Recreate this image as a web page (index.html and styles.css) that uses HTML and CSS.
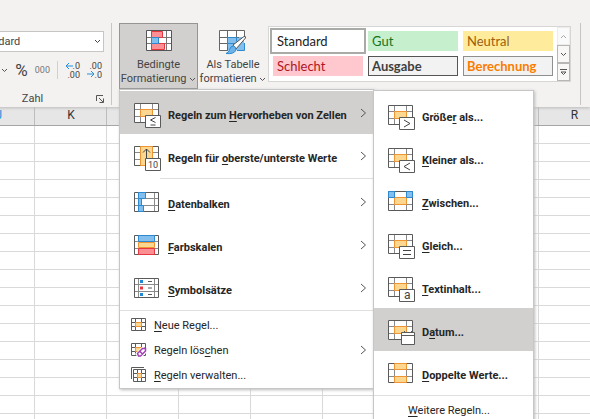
FILE: index.html
```html
<!DOCTYPE html>
<html lang="de">

<head>
    <meta charset="UTF-8">
    <meta name="viewport" content="width=device-width, initial-scale=1.0">
    <title>Bedingte Formatierung</title>
    <link rel="stylesheet" href="styles.css">
</head>

<body>
    <!-- shared icon parts -->
    <svg class="sprite" aria-hidden="true">
        <symbol id="grid" viewBox="0 0 25 20">
            <path fill="none" stroke="#8a8a8a" d="M6.5 0v20M18.5 0v20M0 6.5h25M0 13.5h25" />
            <path fill="none" stroke="#5a5a5a" d="M.5.5h24v19H.5z" />
        </symbol>
        <symbol id="cell" viewBox="0 0 25 20">
            <path fill="#fff" d="M0 0h25v20H0z" />
            <use href="#grid" />
            <path fill="#fbd78f" stroke="#ef9433" d="M6.5 6.5h12v7h-12z" />
        </symbol>
        <symbol id="small" viewBox="0 0 15 13">
            <path fill="#fff" d="M0 0h15v13H0z" />
            <path fill="none" stroke="#5a5a5a" d="M.5.5h14v12H.5zM4.5 0v13M10.5 0v13M0 4.5h15M0 8.5h15" />
            <path fill="#fbd78f" stroke="#ef9433" d="M4.5 4.5h6v4h-6z" />
        </symbol>
    </svg>

    <div class="ribbon">
        <div class="group number-group">
            <select class="format-select" aria-label="Zahlenformat">
                <option>Standard</option>
            </select>
            <div class="number-tools">
                <button type="button" class="tool" aria-label="Buchhaltungsformat">
                    <svg width="7" height="5" viewBox="0 0 7 5"><path class="chev" d="M1 1l2.500 2.500L6 1" /></svg>
                </button>
                <button type="button" class="tool percent">%</button>
                <button type="button" class="tool thousands">000</button>
                <span class="tool-line"></span>
                <button type="button" class="tool decimals" aria-label="Dezimalstelle hinzufügen">
                    <svg width="15" height="16" viewBox="0 0 15 16">
                        <text x="15" y="7">.0</text>
                        <text x="15" y="16">.00</text>
                        <path class="arrow" d="M8 4H1M4 1L1 4l3 3" />
                    </svg>
                </button>
                <button type="button" class="tool decimals" aria-label="Dezimalstelle entfernen">
                    <svg width="15" height="16" viewBox="0 0 15 16">
                        <text x="15" y="7">.00</text>
                        <text x="15" y="16">.0</text>
                        <path class="arrow" d="M0 12h7M4 9l3 3-3 3" />
                    </svg>
                </button>
            </div>
            <div class="group-footer">
                <span class="group-title">Zahl</span>
                <button type="button" class="tool" aria-label="Zahlenformat-Dialog">
                    <svg width="8" height="8" viewBox="0 0 8 8"><path class="chev" d="M.5 6V.5H7M3 3l4 4M7.500 3.500v4h-4" /></svg>
                </button>
            </div>
        </div>

        <div class="group styles-group">
            <div class="dropdown">
                <button type="button" class="big-btn active">
                    <svg width="26" height="21" viewBox="0 0 26 21">
                        <path fill="#fff" d="M.5.5h25v20H.5z" />
                        <path fill="none" stroke="#777" d="M5.500 0v21M20.500 0v21M0 7.500h26M0 13.500h26" />
                        <path fill="none" stroke="#555" d="M.5.5h25v20H.5z" />
                        <path fill="#fc8f94" stroke="#e8383f" d="M5.500 1.500h11v6h-11zM5.500 13.500h13v6h-13z" />
                        <path fill="#83beec" stroke="#2e8ad0" d="M5.500 7.500h7v6h-7z" />
                    </svg>
                    <span>Bedingte</span>
                    <span>Formatierung <svg width="7" height="5" viewBox="0 0 7 5"><path class="chev" d="M1 1l2.500 2.500L6 1" /></svg></span>
                </button>

                <ul class="menu main-menu">
                    <li>
                        <button type="button" class="item selected">
                            <svg class="icon" viewBox="0 0 25 20">
                                <use href="#cell" />
                                <path class="badge" d="M11.500 12.500h15v12h-15z" />
                                <path class="sign" d="M21.500 14.500l-5 2.500 5 2.500M16.500 22h5" />
                            </svg>
                            <span class="label">Regeln zum <u>H</u>ervorheben von Zellen</span>
                            <svg class="more" viewBox="0 0 7 10"><path d="M1 1l4.500 4L1 9" /></svg>
                        </button>
                        <ul class="menu sub-menu">
                            <li>
                                <button type="button" class="item">
                                    <svg class="icon" viewBox="0 0 25 20">
                                        <use href="#cell" />
                                        <path class="badge" d="M11.500 12.500h15v12h-15z" />
                                        <path class="sign" d="M16 15l6 3.500-6 3.500" />
                                    </svg>
                                    <span class="label">Größe<u>r</u> als...</span>
                                </button>
                            </li>
                            <li>
                                <button type="button" class="item">
                                    <svg class="icon" viewBox="0 0 25 20">
                                        <use href="#cell" />
                                        <path class="badge" d="M11.500 12.500h15v12h-15z" />
                                        <path class="sign" d="M22 15l-6 3.500 6 3.500" />
                                    </svg>
                                    <span class="label"><u>K</u>leiner als...</span>
                                </button>
                            </li>
                            <li>
                                <button type="button" class="item">
                                    <svg class="icon" viewBox="0 0 25 20">
                                        <use href="#cell" />
                                        <path fill="#83beec" stroke="#2e8ad0" d="M.5.5h6v6h-6zM18.500.5h6v6h-6z" />
                                    </svg>
                                    <span class="label"><u>Z</u>wischen...</span>
                                </button>
                            </li>
                            <li>
                                <button type="button" class="item">
                                    <svg class="icon" viewBox="0 0 25 20">
                                        <use href="#cell" />
                                        <path class="badge" d="M11.500 12.500h15v12h-15z" />
                                        <path class="sign" d="M15 16.500h8M15 20.500h8" />
                                    </svg>
                                    <span class="label"><u>G</u>leich...</span>
                                </button>
                            </li>
                            <li>
                                <button type="button" class="item">
                                    <svg class="icon" viewBox="0 0 25 20">
                                        <use href="#cell" />
                                        <path class="badge" d="M11.500 12.500h15v12h-15z" />
                                        <text x="16" y="22">a</text>
                                    </svg>
                                    <span class="label"><u>T</u>extinhalt...</span>
                                </button>
                            </li>
                            <li>
                                <button type="button" class="item selected">
                                    <svg class="icon" viewBox="0 0 25 20">
                                        <use href="#cell" />
                                        <path class="badge" d="M13.500 12.500h13v12h-13zM13.500 15.500h13M16.500 11v2M23.500 11v2" />
                                    </svg>
                                    <span class="label">D<u>a</u>tum...</span>
                                </button>
                            </li>
                            <li>
                                <button type="button" class="item">
                                    <svg class="icon" viewBox="0 0 25 20">
                                        <path fill="#fff" d="M0 0h25v20H0z" />
                                        <use href="#grid" />
                                        <path fill="#fbd78f" stroke="#ef9433" d="M6.500.5h12v6h-12zM6.500 13.500h12v6h-12z" />
                                    </svg>
                                    <span class="label"><u>D</u>oppelte Werte...</span>
                                </button>
                            </li>
                            <li class="line"></li>
                            <li><button type="button" class="item compact text-only"><span class="label"><u>W</u>eitere Regeln...</span></button></li>
                        </ul>
                    </li>
                    <li>
                        <button type="button" class="item">
                            <svg class="icon" viewBox="0 0 25 20">
                                <path fill="#fff" d="M0 0h25v20H0z" />
                                <use href="#grid" />
                                <path fill="#fbd78f" stroke="#ef9433" d="M6.500.5h12v19h-12z" />
                                <path class="sign" d="M12.500 12V3M9 6.500L12.500 3 16 6.500" />
                                <path class="badge" d="M11.500 12.500h15v12h-15z" />
                                <text class="ten" x="14" y="22">10</text>
                            </svg>
                            <span class="label">Regeln für <u>o</u>berste/unterste Werte</span>
                            <svg class="more" viewBox="0 0 7 10"><path d="M1 1l4.500 4L1 9" /></svg>
                        </button>
                    </li>
                    <li class="line inset"></li>
                    <li>
                        <button type="button" class="item">
                            <svg class="icon" viewBox="0 0 25 20">
                                <path fill="#fff" d="M0 0h25v20H0z" />
                                <path fill="none" stroke="#8a8a8a" d="M4.500 0v20M20.500 0v20M0 6.500h25M0 13.500h25" />
                                <path fill="none" stroke="#5a5a5a" d="M.5.5h24v19H.5z" />
                                <path fill="#83beec" stroke="#2e8ad0" d="M4.500.5h7v6h-7zM4.500 6.500h3v7h-3zM4.500 13.500h5v6h-5z" />
                            </svg>
                            <span class="label"><u>D</u>atenbalken</span>
                            <svg class="more" viewBox="0 0 7 10"><path d="M1 1l4.500 4L1 9" /></svg>
                        </button>
                    </li>
                    <li>
                        <button type="button" class="item">
                            <svg class="icon" viewBox="0 0 25 20">
                                <path fill="#fff" d="M0 0h25v20H0z" />
                                <path fill="none" stroke="#8a8a8a" d="M0 6.500h25M0 13.500h25" />
                                <path fill="none" stroke="#5a5a5a" d="M.5.5h24v19H.5z" />
                                <path fill="#83beec" stroke="#2e8ad0" d="M4.500.5h16v6h-16z" />
                                <path fill="#fc8f94" stroke="#e8383f" d="M4.500 13.500h16v6h-16z" />
                                <path fill="#fbd78f" stroke="#ef9433" d="M4.500 7.500h16v5h-16z" />
                            </svg>
                            <span class="label"><u>F</u>arbskalen</span>
                            <svg class="more" viewBox="0 0 7 10"><path d="M1 1l4.500 4L1 9" /></svg>
                        </button>
                    </li>
                    <li>
                        <button type="button" class="item">
                            <svg class="icon" viewBox="0 0 25 20">
                                <path fill="#fff" d="M0 0h25v20H0z" />
                                <path fill="none" stroke="#8a8a8a" d="M4.500 0v20M20.500 0v20M0 6.500h25M0 13.500h25" />
                                <path fill="none" stroke="#5a5a5a" d="M.5.5h24v19H.5zM14 3.500h4M14 10h4M14 16.500h4" />
                                <path fill="#1e88d8" d="M6 2h3v3H6zM6 15h3v3H6z" />
                                <path fill="#e8383f" d="M6 8.500h3v3H6z" />
                            </svg>
                            <span class="label"><u>S</u>ymbolsätze</span>
                            <svg class="more" viewBox="0 0 7 10"><path d="M1 1l4.500 4L1 9" /></svg>
                        </button>
                    </li>
                    <li class="line"></li>
                    <li>
                        <button type="button" class="item compact">
                            <svg class="icon" viewBox="0 0 15 13"><use href="#small" /></svg>
                            <span class="label"><u>N</u>eue Regel...</span>
                        </button>
                    </li>
                    <li>
                        <button type="button" class="item compact">
                            <svg class="icon" viewBox="0 0 15 13">
                                <use href="#small" />
                                <path fill="#fff" stroke="#fff" stroke-width="3" d="M6 11l6-6 3 3-6 6z" />
                                <path fill="#fff" stroke="#a23fb5" stroke-width="1.500" d="M6.500 10.500l5-5h3V8l-5 5h-2zM9 8.500l2.500 2.500" />
                            </svg>
                            <span class="label">Regeln lös<u>c</u>hen</span>
                            <svg class="more" viewBox="0 0 7 10"><path d="M1 1l4.500 4L1 9" /></svg>
                        </button>
                    </li>
                    <li>
                        <button type="button" class="item compact">
                            <svg class="icon" viewBox="0 0 15 13">
                                <path fill="none" stroke="#5a5a5a" d="M.5 11V-.5H13" />
                                <path fill="#fff" stroke="#5a5a5a" d="M2.500 1.500h12v12h-12zM6.500 1v13M10.500 1v13M2 5.500h13M2 9.500h13" />
                                <path fill="#fbd78f" stroke="#ef9433" d="M6.500 5.500h4v4h-4z" />
                            </svg>
                            <span class="label"><u>R</u>egeln verwalten...</span>
                        </button>
                    </li>
                </ul>
            </div>

            <button type="button" class="big-btn">
                <svg width="28" height="25" viewBox="0 0 28 25">
                    <path fill="#fff" d="M.5.5h25v20H.5z" />
                    <path fill="#83beec" d="M8 7h17v13H8z" />
                    <path fill="none" stroke="#666" d="M25.500 8V.5H.5v20H9M8.500 0v20M17.500 0v8M0 7.500h20M0 13.500h16" />
                    <path fill="none" stroke="#2e8ad0" d="M8.500 7.500h10M8.500 7.500V17M17.500 7.500v4M18 20.500h7.500V13M8.500 13.500H15" />
                    <path fill="#fff" stroke="#555" d="M14 15L25 6.500q2-.5 1.500 1.500L17 19z" />
                    <path fill="#6db3ea" stroke="#2e8ad0" d="M7 23.500q3-1 3.500-4 1-3.500 4-3.500 3 1 2.500 4-2 4.500-10 3.500z" />
                </svg>
                <span>Als Tabelle</span>
                <span>formatieren <svg width="7" height="5" viewBox="0 0 7 5"><path class="chev" d="M1 1l2.500 2.500L6 1" /></svg></span>
            </button>

            <div class="gallery">
                <div class="gallery-cells">
                    <button type="button" class="style standard">Standard</button>
                    <button type="button" class="style good">Gut</button>
                    <button type="button" class="style neutral">Neutral</button>
                    <button type="button" class="style bad">Schlecht</button>
                    <button type="button" class="style output">Ausgabe</button>
                    <button type="button" class="style calc">Berechnung</button>
                </div>
                <div class="gallery-scroll">
                    <button type="button" disabled aria-label="Nach oben"><svg width="7" height="5" viewBox="0 0 7 5"><path class="chev" d="M1 4l2.500-2.500L6 4" /></svg></button>
                    <button type="button" aria-label="Nach unten"><svg width="7" height="5" viewBox="0 0 7 5"><path class="chev" d="M1 1l2.500 2.500L6 1" /></svg></button>
                    <button type="button" aria-label="Weitere"><svg width="7" height="7" viewBox="0 0 7 7"><path class="chev" d="M0 .5h7M1 3h5L3.500 5.500z" /></svg></button>
                </div>
            </div>
        </div>
    </div>

    <table class="sheet">
        <thead>
            <tr><th class="marked">J</th><th>K</th><th></th><th></th><th></th><th></th><th></th><th></th><th>R</th></tr>
        </thead>
        <tbody id="rows"></tbody>
    </table>

    <script>
        let rows = document.getElementById("rows");

        for (let i = 0; i < 17; i++) {
            let row = rows.insertRow();
            for (let j = 0; j < 9; j++) {
                row.insertCell();
            }
        }
    </script>
</body>

</html>
```
FILE: styles.css
```css
* {
    box-sizing: border-box;
}

body {
    margin: 0;
    height: 100vh;
    overflow: hidden;
    background: #fff;
    color: #444;
    font-family: Roboto, "Open Sans", sans-serif;
    font-size: 11px;
}

button {
    padding: 0;
    border: none;
    background: none;
    color: inherit;
    font: inherit;
}

.sprite {
    display: none;
}

.chev {
    fill: none;
    stroke: #555;
}

/* ribbon */
.ribbon {
    display: flex;
    position: relative;
    z-index: 1;
    margin-left: -45px;
    padding: 23px 9px 2px 0;
    background: #f3f2f1;
    box-shadow: 0 1px 3px #bbb;
}

.group {
    border-right: 1px solid #c8c6c4;
}

.number-group {
    display: flex;
    flex-direction: column;
    width: 157px;
    padding: 8px 7px 0 16px;
}

.format-select {
    height: 21px;
    padding: 0 4px;
    border: 1px solid #c8c6c4;
    border-radius: 0;
    appearance: none;
    background: #fff url("data:image/svg+xml,%3Csvg xmlns='http://www.w3.org/2000/svg' width='7' height='5'%3E%3Cpath d='M1 1l2.500 2.500L6 1' fill='none' stroke='%23444'/%3E%3C/svg%3E") no-repeat right 2px center;
    color: #444;
    font: inherit;
}

.number-tools {
    display: flex;
    align-items: center;
    justify-content: flex-end;
    gap: 7px;
    height: 36px;
    padding-right: 2px;
}

.tool {
    display: flex;
}

.percent {
    font-size: 17px;
}

.thousands {
    font-size: 9px;
    color: #777;
}

.tool-line {
    width: 1px;
    height: 18px;
    background: #d2d0ce;
}

.decimals svg {
    overflow: visible;
}

.decimals text {
    font-size: 9px;
    fill: #444;
    text-anchor: end;
}

.arrow {
    fill: none;
    stroke: #2490dc;
}

.group-footer {
    display: flex;
    align-items: center;
    margin-top: 5px;
    line-height: 12px;
}

.group-title {
    flex: 1;
    padding-right: 2px;
    text-align: center;
}

.styles-group {
    display: flex;
    flex: 1;
    align-items: flex-start;
    padding-left: 7px;
}

.dropdown {
    position: relative;
}

.big-btn {
    display: flex;
    flex-direction: column;
    align-items: center;
    width: 70px;
    height: 66px;
    padding-top: 7px;
    line-height: 14px;
    white-space: nowrap;
}

.big-btn > svg {
    height: 25px;
    margin-bottom: 3px;
}

.big-btn span svg {
    vertical-align: middle;
}

.big-btn.active {
    width: 79px;
    padding-top: 6px;
    border: 1px solid #979593;
    background: #d2d0ce;
}

.big-btn.active > svg {
    height: 21px;
    margin-bottom: 7px;
}

/* cell styles */
.gallery {
    display: flex;
    height: 56px;
    margin-top: 3px;
    border: 1px solid #d8d6d4;
    background: #fff;
}

.gallery-cells {
    display: grid;
    grid-template-columns: repeat(3, 90px);
    grid-auto-rows: 20px;
    gap: 5px;
    padding: 4px;
}

.style {
    padding-left: 4px;
    text-align: left;
    font-family: Lato, sans-serif;
    font-size: 13px;
    line-height: 18px;
}

.standard {
    outline: 2px solid #a9aca6;
    outline-offset: 1px;
    color: #222;
}

.good {
    background: #c6efce;
    color: #17741b;
}

.neutral {
    background: #ffeb9c;
    color: #9c5f0b;
}

.bad {
    background: #ffc7ce;
    color: #ae151d;
}

.output {
    border: 1px solid #555;
    padding-left: 3px;
    background: #f2f2f2;
    color: #3f3f3f;
    font-weight: bold;
}

.calc {
    border: 1px solid #8f8f8f;
    padding-left: 3px;
    background: #f2f2f2;
    color: #fa7d00;
    font-weight: bold;
}

.gallery-scroll {
    display: flex;
    flex-direction: column;
    width: 13px;
}

.gallery-scroll button {
    display: flex;
    flex: 1;
    align-items: center;
    justify-content: center;
    border: 1px solid #b8b6b4;
    background: #f8f7f6;
}

.gallery-scroll button:disabled {
    border-color: #dddbd9;
    opacity: 0.5;
}

/* menus */
.menu {
    position: absolute;
    margin: 0;
    padding: 0;
    border: 1px solid #c6c6c6;
    background: #fff;
    box-shadow: 1px 1px 3px #bbb;
    list-style: none;
}

.main-menu {
    top: 100%;
    left: 0;
    width: 255px;
    padding: 1px 0;
}

.sub-menu {
    top: 0;
    left: 100%;
    width: 161px;
    padding: 2px 0;
}

.item {
    display: flex;
    align-items: center;
    width: 100%;
    height: 43px;
    padding: 0 6px 0 14px;
    color: #262626;
    font-weight: bold;
    text-align: left;
    white-space: nowrap;
}

.item.selected {
    background: #d2d0ce;
}

.icon {
    width: 25px;
    height: 20px;
    margin-right: 9px;
    overflow: visible;
}

.label {
    flex: 1;
    padding-top: 6px;
}

.label u {
    text-underline-offset: 2px;
}

.badge {
    fill: #fff;
    stroke: #5a5a5a;
}

.sign {
    fill: none;
    stroke: #444;
}

.icon text {
    fill: #444;
    font-size: 12px;
    font-weight: 400;
}

.icon .ten {
    font-size: 9px;
}

.more {
    width: 7px;
    height: 10px;
}

.more path {
    fill: none;
    stroke: #555;
}

.compact {
    height: 25px;
    padding-left: 11px;
    font-weight: 400;
}

.compact .icon {
    width: 15px;
    height: 13px;
    margin-right: 8px;
}

.compact .label {
    padding-top: 1px;
}

.text-only {
    padding-left: 34px;
}

.line {
    height: 1px;
    margin: 1px 0;
    background: #e1dfdd;
}

.inset {
    margin-left: 40px;
}

/* worksheet */
.sheet {
    width: 648px;
    margin-left: -37px;
    border-collapse: collapse;
    table-layout: fixed;
}

.sheet th {
    height: 18px;
    padding: 0;
    border-right: 1px solid #bdbdbd;
    border-bottom: 1px solid #a6a6a6;
    background: #e6e6e6;
    color: #333;
    font-size: 12px;
    font-weight: 400;
    line-height: 17px;
}

.sheet .marked {
    color: #2490dc;
}

.sheet td {
    height: 18px;
    padding: 0;
    border-right: 1px solid #d9d9d9;
    border-bottom: 1px solid #d9d9d9;
}
```
